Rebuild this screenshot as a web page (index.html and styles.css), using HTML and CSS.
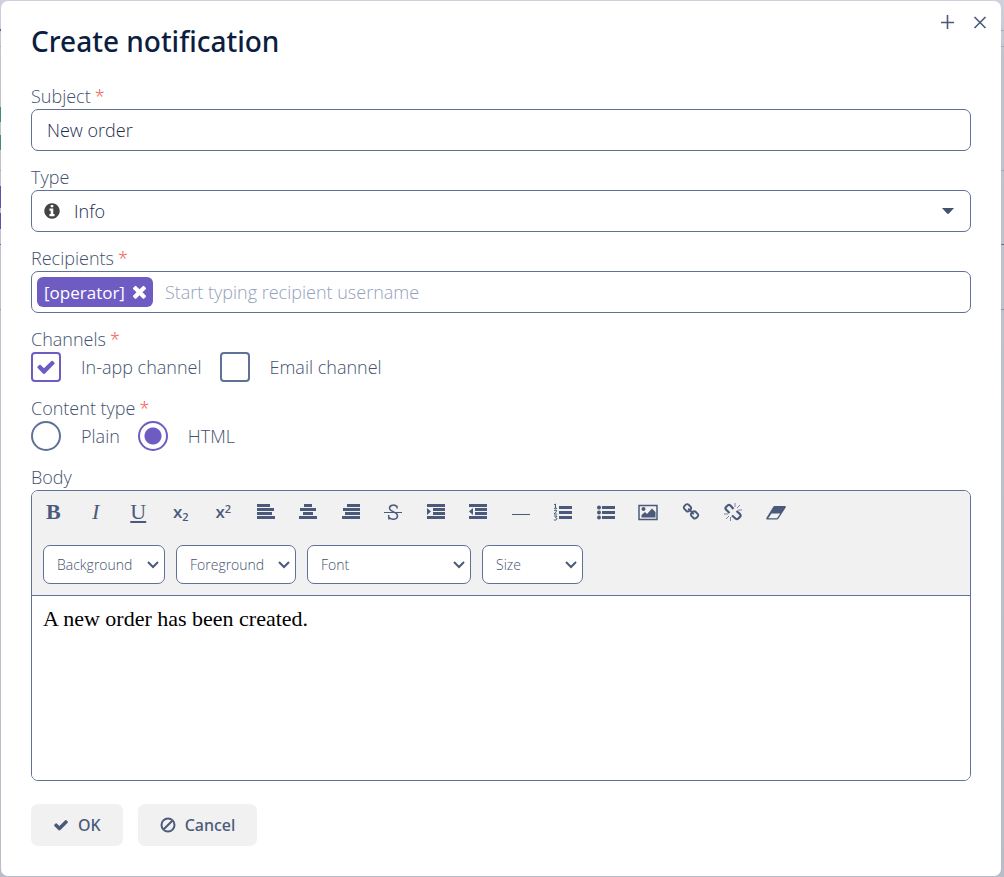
FILE: index.html
```html
<!DOCTYPE html>
<html lang="en">
<head>
<meta charset="utf-8">
<title>Create notification</title>
<link rel="stylesheet" href="styles.css">
</head>
<body>
<main class="dialog" role="dialog" aria-labelledby="dialog-title">
  <header class="dialog-header">
    <h1 id="dialog-title">Create notification</h1>
    <div class="window-tools">
      <button type="button" aria-label="Maximize"><svg viewBox="0 0 14 14"><path d="M6.500 0v14M0 7.500h13"/></svg></button>
      <button type="button" aria-label="Close"><svg viewBox="0 0 14 14"><path d="M1.500 2l11 11M12.500 2l-11 11"/></svg></button>
    </div>
  </header>
  <form class="form">
    <div class="field">
      <label class="caption required" for="subject">Subject</label>
      <input class="control text" id="subject" type="text" value="New order">
    </div>
    <div class="field">
      <label class="caption" for="type">Type</label>
      <div class="combo">
        <select class="control" id="type"><option>Info</option></select>
        <svg class="combo-icon" viewBox="0 0 1792 1792"><path d="M1152 1376v-160q0-14-9-23t-23-9h-96v-512q0-14-9-23t-23-9h-320q-14 0-23 9t-9 23v160q0 14 9 23t23 9h96v320h-96q-14 0-23 9t-9 23v160q0 14 9 23t23 9h448q14 0 23-9t9-23zm-128-896v-160q0-14-9-23t-23-9h-192q-14 0-23 9t-9 23v160q0 14 9 23t23 9h192q14 0 23-9t9-23zm640 416q0 209-103 385.5t-279.5 279.5-385.5 103-385.5-103-279.5-279.5-103-385.5 103-385.5 279.5-279.5 385.5-103 385.5 103 279.5 279.5 103 385.5z"/></svg>
        <svg class="combo-arrow" viewBox="0 0 12 6"><path d="M0 0h12L7 5.500q-1 .8-2 0z"/></svg>
      </div>
    </div>
    <div class="field">
      <label class="caption required" for="recipients">Recipients</label>
      <div class="control tokens">
        <span class="token">[operator]<button type="button" aria-label="Remove operator"><svg viewBox="302 302 1188 1252"><path d="M1490 1322q0 40-28 68l-136 136q-28 28-68 28t-68-28l-294-294-294 294q-28 28-68 28t-68-28l-136-136q-28-28-28-68t28-68l294-294-294-294q-28-28-28-68t28-68l136-136q28-28 68-28t68 28l294 294 294-294q28-28 68-28t68 28l136 136q28 28 28 68t-28 68l-294 294 294 294q28 28 28 68z"/></svg></button></span>
        <input id="recipients" type="text" placeholder="Start typing recipient username">
      </div>
    </div>
    <div class="field" role="group" aria-labelledby="channels-caption">
      <span class="caption required" id="channels-caption">Channels</span>
      <div class="options">
        <label><input type="checkbox" checked>In-app channel</label>
        <label><input type="checkbox">Email channel</label>
      </div>
    </div>
    <div class="field" role="radiogroup" aria-labelledby="content-caption">
      <span class="caption required" id="content-caption">Content type</span>
      <div class="options">
        <label><input type="radio" name="content">Plain</label>
        <label><input type="radio" name="content" checked>HTML</label>
      </div>
    </div>
    <div class="field field-body">
      <span class="caption" id="body-caption">Body</span>
      <div class="editor">
        <div class="toolbar">
          <div class="tools">
            <button type="button" aria-label="Bold"><b>B</b></button>
            <button type="button" aria-label="Italic"><i>I</i></button>
            <button type="button" aria-label="Underline"><u>U</u></button>
            <button type="button" class="script" aria-label="Subscript">x<sub>2</sub></button>
            <button type="button" class="script" aria-label="Superscript">x<sup>2</sup></button>
            <button type="button" aria-label="Align left"><svg viewBox="0 0 20 20"><path d="M1 2h13v3H1zM1 6h17v3H1zM1 10h15v3H1zM1 14h18v3H1z"/></svg></button>
            <button type="button" aria-label="Align center"><svg viewBox="0 0 20 20"><path d="M6 2h8v3H6zM2 6h16v3H2zM5 10h10v3H5zM1 14h18v3H1z"/></svg></button>
            <button type="button" aria-label="Align right"><svg viewBox="0 0 20 20"><path d="M6 2h13v3H6zM2 6h17v3H2zM4 10h15v3H4zM1 14h18v3H1z"/></svg></button>
            <button type="button" aria-label="Strikethrough"><svg viewBox="0 0 20 20"><path d="M1 10h18v1H1z"/><path class="line" d="M14.200 6.500L13.800 3.500M14 5C12.500 2.300 6.500 2.400 6.500 6c0 4.500 8 3.200 8 7.700 0 4.300-7 4.500-8.700 1.300M5.600 13l.4 4.500"/></svg></button>
            <button type="button" aria-label="Indent"><svg viewBox="0 0 20 20"><path d="M1 2h18v3H1zM7 6h12v3H7zM7 10h12v3H7zM1 14h18v3H1zM1 6l4 3.500L1 13z"/></svg></button>
            <button type="button" aria-label="Outdent"><svg viewBox="0 0 20 20"><path d="M1 2h18v3H1zM7 6h12v3H7zM7 10h12v3H7zM1 14h18v3H1zM5 6L1 9.500 5 13z"/></svg></button>
            <button type="button" aria-label="Horizontal line"><svg viewBox="0 0 20 20"><path d="M1 12h18v1H1z"/></svg></button>
            <button type="button" aria-label="Ordered list"><svg viewBox="0 0 20 20"><path d="M6 4h13v3H6zM6 9h13v3H6zM6 14h13v3H6z"/><path class="thin" d="M1 3l1.500-1v4M1 6.300h3M1 8.500q3-1.300 2.700.5L1 12h3.200M1 14h3l-1.500 1.700q2.500.5 1 2-1.200.8-2.700.2"/></svg></button>
            <button type="button" aria-label="Bullet list"><svg viewBox="0 0 20 20"><path d="M6 4h13v3H6zM6 9h13v3H6zM6 14h13v3H6z"/><circle cx="3" cy="5.500" r="2"/><circle cx="3" cy="10.500" r="2"/><circle cx="3" cy="15.500" r="2"/></svg></button>
            <button type="button" aria-label="Image"><svg viewBox="0 0 20 20"><path class="line" d="M1 3.500h18v14H1z"/><circle cx="5.500" cy="7" r="2"/><path d="M3.500 15.500V13L7 10l2 2 5-5.500 3.500 3.500v5.500z"/></svg></button>
            <button type="button" aria-label="Link"><svg viewBox="0 0 1792 1792"><path d="M1520 1216q0-40-28-68l-208-208q-28-28-68-28-42 0-72 32 3 3 19 18.500t21.500 21.500 15 19 13 25.500 3.500 27.500q0 40-28 68t-68 28q-15 0-27.500-3.500t-25.500-13-19-15-21.500-21.500-18.500-19q-33 31-33 73 0 40 28 68l206 207q27 27 68 27 40 0 68-26l147-146q28-28 28-67zm-703-705q0-40-28-68l-206-207q-28-28-68-28-39 0-68 27l-147 146q-28 28-28 67 0 40 28 68l208 208q27 27 68 27 42 0 72-31-3-3-19-18.500t-21.500-21.500-15-19-13-25.500-3.500-27.500q0-40 28-68t68-28q15 0 27.500 3.500t25.500 13 19 15 21.500 21.500 18.500 19q33-31 33-73zm895 705q0 120-85 203l-147 146q-83 83-203 83-121 0-204-85l-206-207q-83-83-83-203 0-123 88-209l-88-88q-86 88-208 88-120 0-204-84l-208-208q-84-84-84-204t85-203l147-146q83-83 203-83 121 0 204 85l206 207q83 83 83 203 0 123-88 209l88 88q86-88 208-88 120 0 204 84l208 208q84 84 84 204z"/></svg></button>
            <button type="button" aria-label="Remove link"><svg viewBox="0 0 20 20"><path class="chain" d="M10.500 7L7.500 3.500Q6 2.300 4.600 3.500L3 5Q1.900 6.300 3 7.600L6.500 11M9 13.500l3.500 3q1.500 1.200 2.800 0l1.700-1.600q1.200-1.400 0-2.800L13.500 9"/><path class="thin faint" d="M12 1v4M17 3l-3 3M19 8h-4M7.500 19v-4M3 17l3-3M1 12h4"/></svg></button>
            <button type="button" aria-label="Clear formatting"><svg viewBox="0 0 20 20"><path fill-rule="evenodd" d="M8.500 4H19q1.300 0 .7 1.500L12.500 16.500q-.6.900-1.500.9H1q-1.300 0-.6-1.300L7.300 4.700Q7.800 4 8.500 4zM5.500 11.500L2.300 16.200H11l3.200-4.700z"/></svg></button>
          </div>
          <div class="pickers">
            <select class="wide" aria-label="Background"><option>Background</option></select>
            <select class="medium" aria-label="Foreground"><option>Foreground</option></select>
            <select class="widest" aria-label="Font"><option>Font</option></select>
            <select class="narrow" aria-label="Size"><option>Size</option></select>
          </div>
        </div>
        <div class="canvas" contenteditable="true" role="textbox" aria-labelledby="body-caption">A new order has been created.</div>
      </div>
    </div>
    <footer class="actions">
      <button type="button"><svg viewBox="0 0 1792 1792"><path d="M1671 566q0 40-28 68l-724 724-136 136q-28 28-68 28t-68-28l-136-136-362-362q-28-28-28-68t28-68l136-136q28-28 68-28t68 28l294 295 656-657q28-28 68-28t68 28l136 136q28 28 28 68z"/></svg>OK</button>
      <button type="button"><svg viewBox="0 0 16 16"><path class="ban" d="M3.500 12.500l9-9M14.500 8a6.500 6.500 0 1 1-13 0 6.500 6.500 0 0 1 13 0z"/></svg>Cancel</button>
    </footer>
  </form>
</main>
</body>
</html>
```
FILE: styles.css
```css
* { box-sizing: border-box; }

:root {
  --ink: #0b1e42;
  --text: #43526f;
  --icon: #4b5a7b;
  --line: #5f7197;
  --accent: #6e5cc3;
  --soft: #f1f1f1;
}

body {
  margin: 0;
  min-height: 100vh;
  padding: 1px 3px 1px 1px;
  display: flex;
  /* page edges visible around the dialog */
  background:
    linear-gradient(#3f8c7d, #3f8c7d) 0 107px / 1px 15px no-repeat,
    linear-gradient(#3f8c7d, #3f8c7d) 0 135px / 1px 15px no-repeat,
    linear-gradient(#5f4fae, #5f4fae) 0 186px / 1px 22px no-repeat,
    linear-gradient(#5f4fae, #5f4fae) 0 213px / 1px 16px no-repeat,
    linear-gradient(#5f4fae, #5f4fae) 0 29px / 1px 2px no-repeat,
    linear-gradient(#a3a5c6, #a3a5c6) 0 30px / 100% 1px no-repeat,
    linear-gradient(#a3a5c6, #a3a5c6) 0 46px / 100% 1px no-repeat,
    linear-gradient(#a3a5c6, #a3a5c6) 0 170px / 100% 1px no-repeat,
    linear-gradient(#5f7197, #5f7197) 0 244px / 100% 1px no-repeat,
    linear-gradient(#8e96b0, #8e96b0) 0 309px / 100% 1px no-repeat,
    linear-gradient(#d0d1dc, #c0c3cf 60px, #b9bdca);
  font-family: "Open Sans", sans-serif;
  font-size: 18px;
  font-weight: 300;
  color: var(--text);
}

button, input, select { font: inherit; color: inherit; }
button { border: 0; background: none; padding: 0; cursor: pointer; color: var(--icon); }
svg { display: block; fill: currentColor; }

.dialog {
  flex: 1;
  display: flex;
  flex-direction: column;
  padding: 0 30px 30px;
  background: #fff;
  border-radius: 7px;
}

.dialog-header { display: flex; justify-content: space-between; }
h1 {
  margin: 0;
  padding: 20px 0 24px;
  font-family: "Noto Sans", "Open Sans", sans-serif;
  font-size: 28px;
  line-height: 40px;
  font-weight: 500;
  color: var(--ink);
}
.window-tools { display: flex; gap: 18px; padding-top: 14px; margin-right: -16px; height: 28px; }
.window-tools svg { width: 14px; height: 14px; fill: none; stroke: currentColor; stroke-width: 1.6; }

.form { flex: 1; display: flex; flex-direction: column; gap: 15px; }
.field { display: flex; flex-direction: column; }
.field-body { flex: 1; }
.caption { line-height: 22px; padding-bottom: 2px; }
.required::after { content: "*"; margin-left: 4px; color: #f4493c; font-weight: 300; }

.control {
  width: 100%;
  height: 42px;
  border: 1px solid var(--line);
  border-radius: 7px;
  background: #fff;
  color: #1b2c50;
}
.text { padding: 0 15px; }
.combo { position: relative; }
.combo select { appearance: none; padding: 0 42px; }
.combo-icon { position: absolute; left: 12px; top: 12px; width: 18px; height: 18px; color: #444; }
.combo-arrow { position: absolute; right: 17px; top: 18px; width: 12px; height: 6px; }

.tokens { display: flex; align-items: center; gap: 12px; padding: 0 5px; }
.token {
  display: flex;
  align-items: center;
  gap: 8px;
  height: 30px;
  padding: 0 7px;
  border-radius: 6px;
  background: var(--accent);
  color: #fff;
  font-size: 17px;
  font-weight: 400;
}
.token button { color: #fff; }
.token svg { width: 13px; height: 14px; }
.tokens input { flex: 1; min-width: 0; border: 0; padding: 0; outline: 0; background: none; }
.tokens input::placeholder { color: #94a1bc; opacity: 1; }

.options { display: flex; gap: 18px; }
.options label { display: flex; align-items: center; gap: 20px; height: 30px; }
.options input {
  appearance: none;
  margin: 0;
  width: 30px;
  height: 30px;
  border: 2px solid var(--line);
  border-radius: 4px;
  background: #fff center no-repeat;
}
.options input:checked { border-color: var(--accent); }
.options [type="checkbox"]:checked {
  background-image: url("data:image/svg+xml,%3Csvg xmlns='http://www.w3.org/2000/svg' width='20' height='20' viewBox='0 0 1792 1792'%3E%3Cpath fill='%236e5cc3' d='M1671 566q0 40-28 68l-724 724-136 136q-28 28-68 28t-68-28l-136-136-362-362q-28-28-28-68t28-68l136-136q28-28 68-28t68 28l294 295 656-657q28-28 68-28t68 28l136 136q28 28 28 68z'/%3E%3C/svg%3E");
}
.options [type="radio"] { border-radius: 50%; }
.options [type="radio"]:checked { background-image: radial-gradient(circle, var(--accent) 8px, transparent 9px); }

.editor {
  flex: 1;
  display: flex;
  flex-direction: column;
  border: 1px solid var(--line);
  border-radius: 7px;
  overflow: hidden;
}
.toolbar { background: var(--soft); border-bottom: 1px solid var(--line); padding-bottom: 11px; }
.tools { display: flex; max-width: 765px; height: 54px; }
.tools button {
  flex: 1;
  height: 41px;
  display: flex;
  align-items: center;
  justify-content: center;
  font-family: "Liberation Serif", serif;
  font-size: 22px;
  font-weight: 400;
}
.tools svg { width: 20px; height: 20px; }
.tools .script { font-family: "Open Sans", sans-serif; font-size: 17px; font-weight: 600; }
.script sub, .script sup { font-size: 11px; line-height: 12px; }
.script sub { padding-top: 10px; }
.script sup { padding-bottom: 6px; }
.line { fill: none; stroke: currentColor; stroke-width: 1.5; }
.thin { fill: none; stroke: currentColor; stroke-width: 1; }
.faint { opacity: .7; }
.chain { fill: none; stroke: currentColor; stroke-width: 2.2; }
.tools svg[viewBox="0 0 1792 1792"] { width: 18px; height: 18px; }

.pickers { display: flex; flex-wrap: wrap; gap: 11px; padding: 0 11px; }
.pickers select {
  appearance: none;
  height: 39px;
  border: 1px solid var(--line);
  border-radius: 7px;
  padding: 0 13px;
  font-size: 14px;
  background: #fff url("data:image/svg+xml,%3Csvg xmlns='http://www.w3.org/2000/svg' width='12' height='8' viewBox='0 0 12 8'%3E%3Cpath fill='none' stroke='%234b5a7b' stroke-width='2' d='M1 1l5 5 5-5'/%3E%3C/svg%3E") right 5px center no-repeat;
}
.wide { width: 122px; }
.medium { width: 120px; }
.widest { width: 164px; }
.narrow { width: 101px; }

.canvas {
  flex: 1;
  padding: 10px 11px;
  background: #fff;
  color: #000;
  font-family: "Liberation Serif", serif;
  font-size: 22px;
  line-height: 26px;
  font-weight: 400;
  outline: 0;
}

.actions { display: flex; gap: 15px; padding-top: 8px; }
.actions button {
  display: flex;
  align-items: center;
  gap: 9px;
  height: 42px;
  padding: 0 22px;
  border-radius: 7px;
  background: var(--soft);
  font-family: "Noto Sans", "Open Sans", sans-serif;
  font-size: 16px;
  font-weight: 500;
}
.actions svg { width: 16px; height: 16px; }
.ban { fill: none; stroke: currentColor; stroke-width: 2; }
```
